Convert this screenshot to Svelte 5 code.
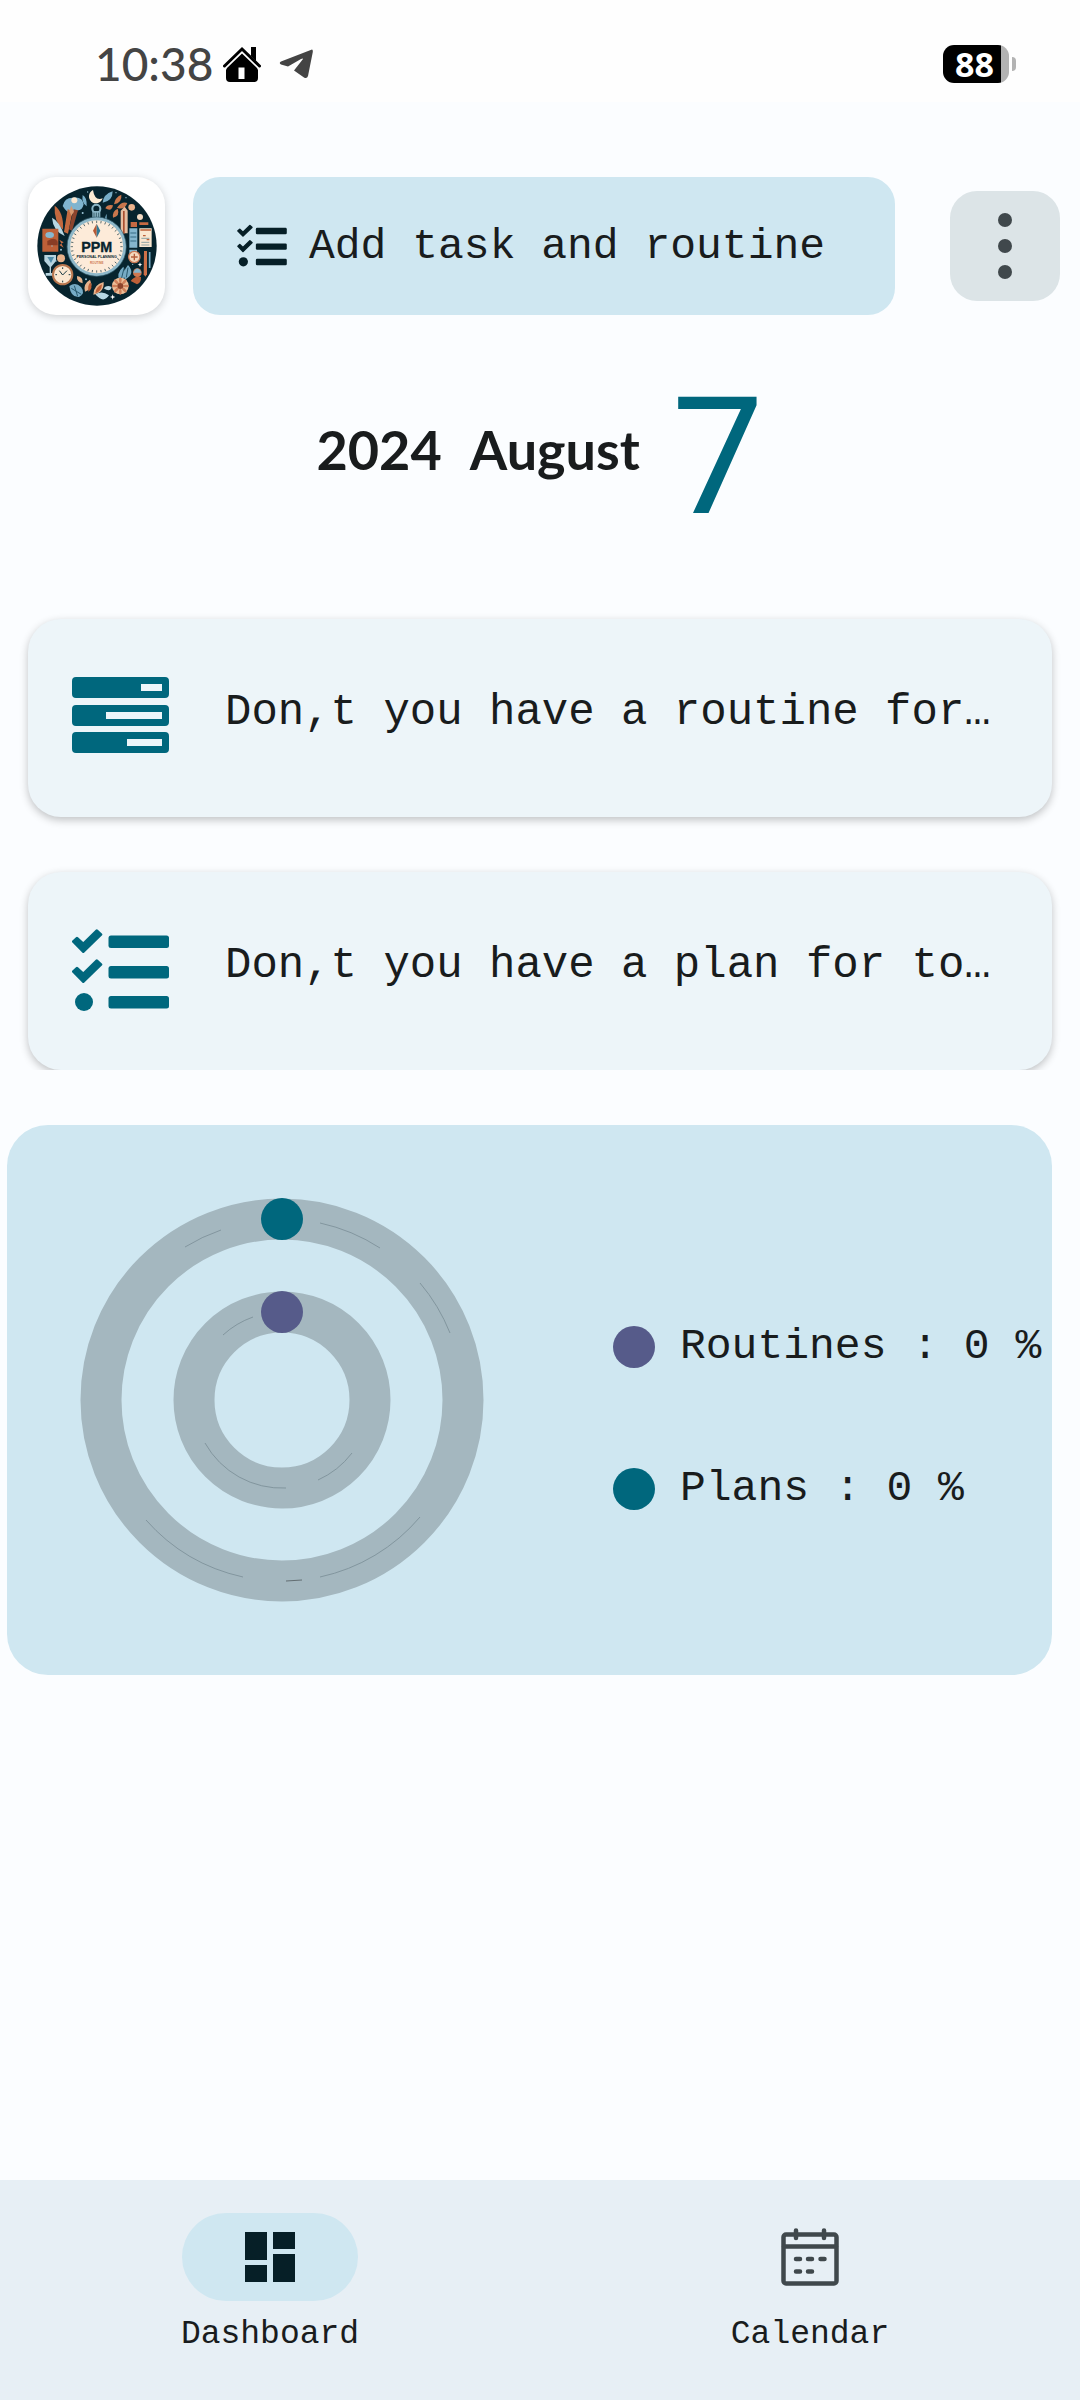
<script>
  const tasks = [
    { icon: 'routine', text: 'Don,t you have a routine for…' },
    { icon: 'plan', text: 'Don,t you have a plan for to…' }
  ];
  const stats = [
    { name: 'Routines', value: 0, tone: 'violet' },
    { name: 'Plans', value: 0, tone: 'teal' }
  ];
  const ticks = Array.from({ length: 36 }, (_, i) => i * 10);
</script>

{#snippet checklist()}
  <g fill="currentColor">
    {#each [0, 30] as dy}
      <path
        transform="translate(0 {dy})"
        stroke="currentColor"
        stroke-width="3"
        stroke-linejoin="round"
        d="M1.500 15.500 5 12.300 11.300 18 24.800 4.800 28.800 8.500 11.300 25.500Z"
      />
    {/each}
    <circle cx="12" cy="76" r="9" />
    <rect x="36.500" y="9.500" width="60.500" height="12.500" rx="2.500" />
    <rect x="36.500" y="40" width="60.500" height="12.500" rx="2.500" />
    <rect x="36.500" y="70" width="60.500" height="12.500" rx="2.500" />
  </g>
{/snippet}

<div class="page">
  <div class="status">
    <span class="clock">10:38</span>
    <svg class="house" viewBox="0 0 38 37" aria-hidden="true">
      <path d="M28 1h5v14l-5-5Z" />
      <path d="M1.500 20 19 3 36.500 20" fill="none" stroke="#000" stroke-width="3" stroke-linecap="round" />
      <path fill-rule="evenodd" d="M19 7.500 34 22v0l1 2v8q0 4-4 4H7q-4 0-4-4v-8l1-2ZM15.500 21.500v11.500h6V21.500Z" />
    </svg>
    <svg class="plane" viewBox="0 0 34 30" aria-hidden="true">
      <path fill="#444" d="M33 0.500Q34 .500 33.800 3L29 27Q28 30 25 28.500L15 21.500 24 10Q24 9 22 10L9 17.500 2 15.500Q-.500 14 2 12.500Z" />
    </svg>
    <div class="battery" role="img" aria-label="Battery 88 percent">
      <span class="cell">88</span>
      <span class="nub"></span>
    </div>
  </div>

  <header>
    <button class="logo" aria-label="PPM profile">
      <svg viewBox="53 65 360 360" aria-hidden="true">
        <defs><clipPath id="disc"><circle cx="233" cy="245" r="179" /></clipPath></defs>
        <circle cx="233" cy="245" r="179" fill="#07242e" />
        <g clip-path="url(#disc)">
          <path fill="#7fb4cf" d="M130 125q5-25 30-25 30-5 33 20-5 22-25 18-18 20-38-13Z" />
          <circle cx="165" cy="108" r="9" fill="#fbe6cf" />
          <path fill="#fdebd3" d="M221 77a21 21 0 1 0 29 25q-24 9-29-25Z" />
          <path fill="#c2693f" d="M106 124q28 20 25 72-28-25-25-72ZM145 135l15 5-14 68-12-5Z" />
          <path fill="#b8d7e3" d="M98 160q22 10 38 55-35-15-38-55Z" />
          <path fill="#8d452d" d="M163 135l13 3-18 62-9-5Z" />
          <path fill="#d99a70" d="M150 140l6-16 8 18-8 12Z" />
          <path fill="#78aec8" d="M190 92q14 8 12 34-16-10-12-34ZM250 115q2-25 30-34 0 30-30 34ZM262 148q-10 16 0 28Z" />
          <path fill="#c9774d" d="M258 132q6-13 23-9-4 21-23 9ZM284 120q3-21 22-29 3 25-22 29ZM281 160q-3-20 14-27 8 22-14 27ZM293 130q14-20 31-14-8 23-31 14Z" />
          <circle cx="337" cy="129" r="10" fill="#eab38d" />
          <circle cx="362" cy="158" r="9" fill="#f2dac4" />
          <path fill="#e8bea0" d="M304 139l12-12 9 12v68h-21Z" />
          <path fill="#a94f30" d="M311 140h5v68h-5Z" />
          <path fill="#bd6038" d="M69 193h48v69H69Z" />
          <ellipse cx="91" cy="212" rx="13" ry="9" fill="#88b8d0" />
          <path fill="#8a3d25" d="M84 230q24-14 31 2v11H84Z" />
          <path fill="#b6d3de" d="M75 272h35v18l-15 18v18h14v8H79v-8h12v-18l-16-18Z" />
          <path fill="#4f8daa" d="M84 278h20l-9 18Z" />
          <circle cx="125" cy="282" r="12" fill="#e7b28b" />
          <path fill="#c26a43" d="M120 226l13 8-13 8 13 8" />
          <path fill="#84b6ce" d="M330 192h24v58h-24ZM330 256h23v15h-23Z" />
          <path stroke="#356b83" stroke-width="3" d="M333 206h18M333 218h18M333 230h18" />
          <path fill="#c66a43" d="M334 173h19v15h-19ZM360 174h27v8h-27Z" />
          <path fill="#fae7d0" d="M360 192h37v56h-37Z" />
          <path stroke="#bd6038" stroke-width="4" d="M363 197h32M371 214h8M382 226h8" />
          <path stroke="#56818d" stroke-width="2" d="M366 222h24M366 234h24M366 242h24" />
          <circle cx="345" cy="278" r="17" fill="#f4d8bd" stroke="#c97855" stroke-width="4" />
          <path stroke="#b65d3b" stroke-width="4" d="M345 268v20M335 278h20" />
          <path fill="#cd7048" d="M374 260h9v70l-5 7-5-7Z" />
          <path stroke="#78aec8" stroke-width="5" d="M391 263v48" />
          <circle cx="130" cy="331" r="29" fill="#fbe8d1" stroke="#b9774f" stroke-width="6" />
          <path fill="none" stroke="#173944" stroke-width="3" d="M120 319l10 13 13-13M130 309v5M130 349v5M108 331h5M148 331h5" />
          <path fill="#76abc5" d="M150 365q19-13 35 3 15 20-6 30-25 2-29-33ZM312 307q-23 20-11 43 25-11 11-43ZM326 302q-20 25-9 44 33-18 9-44Z" />
          <path fill="none" stroke="#28586c" stroke-width="3" d="M156 372l30 18M165 364l10 32M314 312l-8 32M326 310l-5 29" />
          <path fill="#e7b38d" d="M173 335q19 2 17 22-19-5-17-22ZM197 382q-7-23 15-36 13 24-15 36ZM222 391q1-31 31-38 2 32-31 38Z" />
          <path fill="#bd6038" d="M207 382q-3-20 7-28 8 20-7 28ZM228 387q2-20 20-27-1 22-20 27ZM334 350q14-18 31-12 1 17-12 22Z" />
          <path fill="#b8d7e3" d="M228 390q20-13 41 3-17 26-41-3ZM253 372q10-12 24-4-4 17-24 4Z" />
          <circle cx="303" cy="365" r="25" fill="#ecbe98" />
          <g fill="#cf805a">
            {#each [0, 45, 90, 135, 180, 225, 270, 315] as a}
              <ellipse cx="303" cy="348" rx="4" ry="9" transform="rotate({a} 303 365)" />
            {/each}
          </g>
          <circle cx="303" cy="365" r="9" fill="#8e452c" />
          <circle cx="354" cy="325" r="13" fill="#cf7750" />
          <path fill="#85b5cc" d="M342 325q12-25 24 0Z" />
          <path fill="#fff" d="M280 390l2 6 6 2-6 2-2 6-2-6-6-2 6-2ZM362 294l2 5 5 2-5 2-2 5-2-5-5-2 5-2Z" />
          <g fill="#9cc5d7">
            <circle cx="205" cy="83" r="2" /><circle cx="290" cy="85" r="2" /><circle cx="98" cy="245" r="2" />
            <circle cx="125" cy="256" r="3" /><circle cx="340" cy="300" r="2" /><circle cx="200" cy="345" r="3" />
            <circle cx="320" cy="100" r="2" /><circle cx="110" cy="290" r="2" /><circle cx="190" cy="146" r="3" />
          </g>
        </g>
        <circle cx="231" cy="133" r="12" fill="none" stroke="#8ab4c4" stroke-width="6" />
        <path fill="#8ab4c4" d="M219 140h24v22h-24Z" />
        <path stroke="#173944" stroke-width="2" d="M224 145v14M231 145v14M238 145v14" />
        <circle cx="232" cy="247" r="84" fill="#fdebd9" stroke="#8fb8c9" stroke-width="9" />
        <circle cx="232" cy="247" r="89" fill="none" stroke="#345f70" stroke-width="2" />
        <g stroke="#173944" stroke-width="2">
          {#each ticks as a}
            <path d="M232 169v7" transform="rotate({a} 232 247)" />
          {/each}
        </g>
        <path fill="#b85935" d="M232 178l-11 21 11 21Z" />
        <path fill="#327894" d="M232 178l11 21-11 21Z" />
        <text class="brand" x="232" y="264" text-anchor="middle">PPM</text>
        <text class="brand-sub" x="232" y="281" text-anchor="middle">PERSONAL PLANNING</text>
        <text class="brand-tag" x="232" y="298" text-anchor="middle">ROUTINE</text>
      </svg>
    </button>
    <button class="add">
      <svg viewBox="0 0 97 90" aria-hidden="true">{@render checklist()}</svg>
      <span>Add task and routine</span>
    </button>
    <button class="menu" aria-label="More options">
      <svg viewBox="0 0 14 66" aria-hidden="true">
        <circle cx="7" cy="7" r="7" /><circle cx="7" cy="33" r="7" /><circle cx="7" cy="59" r="7" />
      </svg>
    </button>
  </header>

  <main>
    <h1 class="date">
      <span class="month"><span>2024</span> <span>August</span></span>
      <span class="day">7</span>
    </h1>

    <section class="tasks">
      {#each tasks as task}
        <article class="card">
          <svg viewBox="0 0 97 90" aria-hidden="true">
            {#if task.icon === 'routine'}
              <path
                fill="currentColor"
                fill-rule="evenodd"
                d="M4 4H93q4 0 4 4V21q0 4-4 4H4q-4 0-4-4V8q0-4 4-4ZM69 11v7H90v-7ZM4 32H93q4 0 4 4V49q0 4-4 4H4q-4 0-4-4V36q0-4 4-4ZM34 39v7H90v-7ZM4 59H93q4 0 4 4V76q0 4-4 4H4q-4 0-4-4V63q0-4 4-4ZM55 66v7H90v-7Z"
              />
            {:else}
              {@render checklist()}
            {/if}
          </svg>
          <p>{task.text}</p>
        </article>
      {/each}
    </section>

    <section class="progress">
      <svg class="rings" viewBox="0 0 404 404" role="img" aria-label="Progress of plans and routines">
        <g fill="none" stroke="#a4b7bf" stroke-width="41">
          <circle cx="202" cy="202" r="181" />
          <circle cx="202" cy="202" r="88" />
        </g>
        <g fill="none" stroke="#50656e" stroke-width="1" opacity="0.4">
          <path d="M105 49A181 181 0 0 1 141 32M240 25A181 181 0 0 1 300 50M370 135A181 181 0 0 0 340 85M66 322A181 181 0 0 0 163 379M340 319A181 181 0 0 1 240 379" />
          <path d="M143 137A88 88 0 0 1 173 119M125 245A88 88 0 0 0 206 290M238 282A88 88 0 0 0 272 255" />
          <path d="M206 383L222 382" stroke="#000" />
        </g>
        <circle cx="202" cy="21" r="21" fill="#00677d" />
        <circle cx="202" cy="114" r="21" fill="#565b8a" />
      </svg>
      <ul>
        {#each stats as s}
          <li><i class={s.tone}></i>{s.name} : {s.value} %</li>
        {/each}
      </ul>
    </section>
  </main>

  <nav>
    <button class="tab" aria-current="page">
      <span class="pill active">
        <svg viewBox="0 0 50 50" aria-hidden="true">
          <path fill="#061f27" d="M0 0H22V28H0ZM28 0H50V17H28ZM0 33H22V50H0ZM28 22H50V50H28Z" />
        </svg>
      </span>
      <span>Dashboard</span>
    </button>
    <button class="tab">
      <span class="pill">
        <svg class="cal" viewBox="0 0 58 58" aria-hidden="true">
          <g fill="none" stroke="#40484c" stroke-width="4.500" stroke-linecap="round">
            <rect x="2.500" y="6.500" width="53" height="49" rx="2.500" />
            <path d="M3 18.500H55M15 2.500V10M43 2.500V10M15 31h4M27 31h4M39.500 31h4M15 43.500h4M27 43.500h4" />
          </g>
        </svg>
      </span>
      <span>Calendar</span>
    </button>
  </nav>
</div>

<style>
  :global(body) {
    margin: 0;
    background: #fbfdff;
  }
  .page {
    min-height: 100vh;
    display: flex;
    flex-direction: column;
    background: #fbfdff;
    color: #191c1d;
    font-family: 'Liberation Mono', monospace;
    font-size: 43px;
  }
  button {
    border: 0;
    margin: 0;
    padding: 0;
    font: inherit;
    color: inherit;
    cursor: pointer;
  }
  svg {
    display: block;
    flex: none;
  }
  .status {
    display: flex;
    align-items: center;
    padding: 26px 64px 0 95px;
    background: #fefefe;
  }
  .clock {
    font-family: Lato, sans-serif;
    font-size: 46px;
    font-weight: 500;
    line-height: 76px;
    color: #444;
    margin-right: 10px;
  }
  .house {
    width: 38px;
    height: 37px;
    margin-right: 18px;
  }
  .plane {
    width: 34px;
    height: 30px;
  }
  .battery {
    display: flex;
    align-items: center;
    gap: 3px;
    margin-left: auto;
  }
  .cell {
    padding: 0 15px 0 12px;
    border-radius: 11px;
    background: linear-gradient(to right, #000 88%, #b3b3b3 88%);
    color: #fff;
    font: 700 34px/38px 'Open Sans', sans-serif;
  }
  .nub {
    width: 4px;
    height: 14px;
    border-radius: 0 4px 4px 0;
    background: #b3b3b3;
  }
  header {
    display: flex;
    align-items: center;
    padding: 75px 20px 0 28px;
  }
  .logo {
    width: 137px;
    height: 138px;
    border-radius: 28px;
    background: #fff;
    box-shadow: 0 2px 8px rgba(0, 0, 0, 0.18);
    display: grid;
    place-items: center;
    margin-right: 28px;
  }
  .logo svg {
    width: 120px;
    height: 120px;
  }
  .brand {
    font: 900 43px 'Liberation Sans', sans-serif;
    fill: #07242e;
    stroke: #07242e;
    stroke-width: 1px;
  }
  .brand-sub {
    font: 700 11px 'Liberation Sans', sans-serif;
    fill: #07242e;
  }
  .brand-tag {
    font: 700 9px 'Liberation Sans', sans-serif;
    fill: #cf7750;
  }
  .add {
    flex: 1;
    height: 138px;
    display: flex;
    align-items: center;
    padding: 0 44px;
    gap: 22px;
    border-radius: 27px;
    background: #cfe7f1;
    white-space: nowrap;
  }
  .add svg {
    width: 50px;
    height: 46px;
    color: #061f27;
  }
  .menu {
    width: 110px;
    height: 110px;
    margin-left: 55px;
    border-radius: 27px;
    background: #dce4e7;
    display: grid;
    place-items: center;
  }
  .menu svg {
    width: 14px;
    height: 66px;
    fill: #40484c;
  }
  main {
    flex: 1;
  }
  .date {
    margin: 82px 0;
    display: flex;
    justify-content: center;
    align-items: flex-start;
    gap: 32px;
    font-weight: 400;
  }
  .month {
    display: flex;
    gap: 28px;
    font: 700 54px/106px Lato, sans-serif;
  }
  .day {
    font: 400 163px/122px Roboto, sans-serif;
    height: 120px;
    color: #00677d;
  }
  .tasks {
    display: flex;
    flex-direction: column;
    gap: 55px;
    padding: 20px 28px 0;
    overflow: hidden;
  }
  .card {
    display: flex;
    align-items: flex-start;
    gap: 56px;
    padding: 54px 44px;
    border-radius: 33px;
    background: #edf5f9;
    box-shadow: 0 3px 9px rgba(0, 0, 0, 0.24);
  }
  .card svg {
    width: 97px;
    height: 90px;
    color: #00677d;
  }
  .card p {
    margin: 0;
    min-width: 0;
    font-size: 44px;
    line-height: 78px;
    white-space: nowrap;
    overflow: hidden;
    text-overflow: ellipsis;
  }
  .progress {
    display: flex;
    align-items: center;
    gap: 129px;
    margin: 55px 28px 0 7px;
    padding: 73px 0 73px 73px;
    border-radius: 41px;
    background: #cfe7f1;
  }
  .rings {
    width: 404px;
    height: 404px;
  }
  ul {
    list-style: none;
    margin: 0;
    padding: 36px 0 0;
    display: flex;
    flex-direction: column;
    gap: 86px;
  }
  li {
    display: flex;
    align-items: center;
    gap: 25px;
    line-height: 56px;
    white-space: nowrap;
  }
  li i {
    width: 42px;
    height: 42px;
    border-radius: 50%;
  }
  .violet {
    background: #565b8a;
  }
  .teal {
    background: #00677d;
  }
  nav {
    display: flex;
    background: #e7eff5;
  }
  .tab {
    flex: 1;
    display: flex;
    flex-direction: column;
    align-items: center;
    gap: 10px;
    padding: 33px 0 41px;
    background: none;
    font-size: 33px;
    line-height: 48px;
  }
  .pill {
    width: 176px;
    height: 88px;
    border-radius: 44px;
    display: grid;
    place-items: center;
  }
  .active {
    background: #cfe7f1;
  }
  .pill svg {
    width: 50px;
    height: 50px;
  }
  .pill .cal {
    width: 58px;
    height: 58px;
  }
</style>
